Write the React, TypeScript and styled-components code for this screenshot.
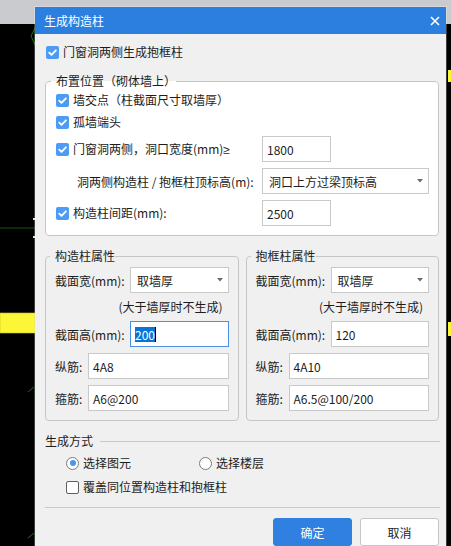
import React from 'react'
import styled, { createGlobalStyle } from 'styled-components'

const GlobalStyle = createGlobalStyle`
  html, body {
    margin: 0;
    padding: 0;
    background: #000;
  }
  body {
    font-family: "Noto Sans CJK SC", "Noto Sans", sans-serif;
    font-size: 12px;
    color: #1c1c1c;
  }
  * {
    box-sizing: border-box;
  }
`

interface ColumnGroup {
  title: string
  width: string
  height: string
  focused: boolean
  longBar: string
  stirrup: string
}

const columnGroups: ColumnGroup[] = [
  { title: '构造柱属性', width: '取墙厚', height: '200', focused: true, longBar: '4A8', stirrup: 'A6@200' },
  { title: '抱框柱属性', width: '取墙厚', height: '120', focused: false, longBar: '4A10', stirrup: 'A6.5@100/200' }
]

const CheckBox = ({ checked }: { checked: boolean }) => (
  <Box $checked={checked}>
    {checked && (
      <svg width="13" height="13" viewBox="0 0 13 13">
        <path d="M3.2 6.6 L5.5 8.9 L9.9 4.3" fill="none" stroke="#fff" strokeWidth="1.8" strokeLinecap="round" strokeLinejoin="round" />
      </svg>
    )}
  </Box>
)

const Radio = ({ checked }: { checked: boolean }) => <RadioCircle $checked={checked} />

const ArrowDown = () => (
  <svg width="6" height="4" viewBox="0 0 6 4">
    <path d="M0 0 H6 L3 3.5 Z" fill="#6b6b6b" />
  </svg>
)

const App = () => (
  <>
    <GlobalStyle />
    <Screen>
      <TopStrip />
      <Canvas>
        <svg width="451" height="522" viewBox="0 0 451 522">
          <polyline points="35,4 31,12 35,21" fill="none" stroke="#0c7a0c" strokeWidth="1" />
          <line x1="0" y1="204" x2="35" y2="204" stroke="#0d5e0d" strokeWidth="1" />
          <rect x="33" y="194" width="2" height="2" fill="#ddd" />
          <rect x="33" y="212" width="2" height="2" fill="#ddd" />
          <rect x="0" y="289" width="35" height="20" fill="#fbf736" stroke="#c9c41e" strokeWidth="0.6" />
          <line x1="28" y1="368" x2="34" y2="363" stroke="#0c7a0c" strokeWidth="1" />
          <line x1="28" y1="514" x2="34" y2="509" stroke="#0c7a0c" strokeWidth="1" />
          <rect x="448" y="46" width="3" height="12" fill="#fbf736" />
          <rect x="448" y="298" width="3" height="14" fill="#fbf736" />
        </svg>
      </Canvas>

      <Dialog>
        <TitleBar>
          <span>生成构造柱</span>
          <svg width="10" height="10" viewBox="0 0 10 10">
            <path d="M1 1 L9 9 M9 1 L1 9" stroke="#fff" strokeWidth="1.6" />
          </svg>
        </TitleBar>

        <Body>
          <CheckRow $indent={1}>
            <CheckBox checked />
            门窗洞两侧生成抱框柱
          </CheckRow>

          <Group $white $top={13}>
            <Legend>布置位置（砌体墙上）</Legend>
            <GroupRows>
              <CheckRow>
                <CheckBox checked />
                墙交点（柱截面尺寸取墙厚）
              </CheckRow>
              <CheckRow>
                <CheckBox checked />
                孤墙端头
              </CheckRow>
              <FormRow>
                <CheckRow>
                  <CheckBox checked />
                  <span>
                    门窗洞两侧，洞口宽度(mm)<Latin>≥</Latin>
                  </span>
                </CheckRow>
                <Field $width={69}>1800</Field>
              </FormRow>
              <FormRow>
                <FormLabel $indent={21}>洞两侧构造柱 / 抱框柱顶标高(m):</FormLabel>
                <Select>
                  <span>洞口上方过梁顶标高</span>
                  <ArrowDown />
                </Select>
              </FormRow>
              <FormRow>
                <CheckRow>
                  <CheckBox checked />
                  构造柱间距(mm):
                </CheckRow>
                <Field $width={69}>2500</Field>
              </FormRow>
            </GroupRows>
          </Group>

          <GroupPair>
            {columnGroups.map((group) => (
              <Group key={group.title}>
                <Legend>{group.title}</Legend>
                <GroupRows>
                  <PropRow>
                    <PropLabel $width={75}>截面宽(mm):</PropLabel>
                    <Select>
                      <span>{group.width}</span>
                      <ArrowDown />
                    </Select>
                  </PropRow>
                  <Note>(大于墙厚时不生成)</Note>
                  <PropRow>
                    <PropLabel $width={75}>截面高(mm):</PropLabel>
                    <Field $focused={group.focused}>
                      {group.focused ? (
                        <>
                          <Selected>{group.height}</Selected>
                          <Caret />
                        </>
                      ) : (
                        group.height
                      )}
                    </Field>
                  </PropRow>
                  <PropRow>
                    <PropLabel $width={33}>纵筋:</PropLabel>
                    <Field>{group.longBar}</Field>
                  </PropRow>
                  <PropRow>
                    <PropLabel $width={33}>箍筋:</PropLabel>
                    <Field>{group.stirrup}</Field>
                  </PropRow>
                </GroupRows>
              </Group>
            ))}
          </GroupPair>

          <SectionHeader>
            <span>生成方式</span>
            <Rule />
          </SectionHeader>

          <RadioRow>
            <CheckRow>
              <Radio checked />
              选择图元
            </CheckRow>
            <CheckRow>
              <Radio checked={false} />
              选择楼层
            </CheckRow>
          </RadioRow>

          <CheckRow $indent={21} $top={8}>
            <CheckBox checked={false} />
            覆盖同位置构造柱和抱框柱
          </CheckRow>

          <Divider />

          <Footer>
            <Button $primary>确定</Button>
            <Button>取消</Button>
          </Footer>
        </Body>
      </Dialog>
    </Screen>
  </>
)

export default App

const Screen = styled.div`
  position: relative;
  width: 451px;
  height: 546px;
  overflow: hidden;
  background: #000;
  display: flex;
  flex-direction: column;
`

const TopStrip = styled.div`
  height: 24px;
  flex-shrink: 0;
  background: #c9cbcf;
`

const Canvas = styled.div`
  flex: 1;

  svg {
    display: block;
  }
`

const Dialog = styled.div`
  position: absolute;
  left: 35px;
  top: 7px;
  width: 411px;
  background: #f0f0f0;
  box-shadow: 0 0 0 1px rgba(255, 255, 255, 0.25);
`

const TitleBar = styled.div`
  height: 27px;
  display: flex;
  align-items: center;
  justify-content: space-between;
  padding: 0 6px 0 9px;
  background: #2c7fdf;
  color: #fff;
  font-size: 12px;
  line-height: 16px;
`

const Body = styled.div`
  display: flex;
  flex-direction: column;
  padding: 10px 7px 12px 10px;
`

const Box = styled.span<{ $checked: boolean }>`
  width: 13px;
  height: 13px;
  flex-shrink: 0;
  border-radius: 2px;
  background: ${({ $checked }) => ($checked ? '#4c9cf3' : '#fff')};
  border: ${({ $checked }) => ($checked ? 'none' : '1px solid #5f5f5f')};

  svg {
    display: block;
  }
`

const RadioCircle = styled.span<{ $checked: boolean }>`
  width: 13px;
  height: 13px;
  flex-shrink: 0;
  border-radius: 50%;
  background: #fff;
  border: 1px solid #7b7b7b;
  display: flex;
  align-items: center;
  justify-content: center;

  &::after {
    content: '';
    display: ${({ $checked }) => ($checked ? 'block' : 'none')};
    width: 6px;
    height: 6px;
    border-radius: 50%;
    background: #4796ee;
  }
`

const CheckRow = styled.div<{ $indent?: number; $top?: number }>`
  display: flex;
  align-items: center;
  gap: 4px;
  height: 16px;
  line-height: 16px;
  white-space: nowrap;
  margin-left: ${({ $indent }) => $indent ?? 0}px;
  margin-top: ${({ $top }) => $top ?? 0}px;
`

const Latin = styled.span`
  font-family: "Noto Sans", sans-serif;
`

const Group = styled.fieldset<{ $white?: boolean; $top?: number }>`
  margin: ${({ $top }) => $top ?? 0}px 0 0;
  padding: 3px 9px 9px ${({ $white }) => ($white ? 10 : 9)}px;
  min-width: 0;
  border: 1px solid #c6c6c6;
  border-radius: 4px;
  background: ${({ $white }) => ($white ? '#fff' : 'transparent')};
`

const Legend = styled.legend`
  margin-left: -5px;
  padding: 0 0 0 5px;
  font-size: 12px;
  line-height: 16px;
  color: #1c1c1c;
`

const GroupRows = styled.div`
  display: flex;
  flex-direction: column;
  gap: 6px;
`

const FormRow = styled.div`
  display: grid;
  grid-template-columns: 206px 1fr;
  align-items: center;
`

const FormLabel = styled.span<{ $indent: number }>`
  padding-left: ${({ $indent }) => $indent}px;
  white-space: nowrap;
`

const Field = styled.div<{ $width?: number; $focused?: boolean }>`
  display: flex;
  align-items: center;
  height: 26px;
  width: ${({ $width }) => ($width ? `${$width}px` : 'auto')};
  flex: ${({ $width }) => ($width ? 'none' : '1')};
  padding: 0 4px;
  background: #fff;
  border: 1px solid ${({ $focused }) => ($focused ? '#4a8ee6' : '#c9c9c9')};
  white-space: nowrap;
`

const Selected = styled.span`
  background: #0a74d6;
  color: #fff;
  line-height: 15px;
`

const Caret = styled.span`
  width: 1px;
  height: 15px;
  background: #000;
`

const Select = styled.div`
  display: flex;
  align-items: center;
  justify-content: space-between;
  flex: 1;
  height: 26px;
  padding: 0 5px 0 6px;
  background: #fff;
  border: 1px solid #c9c9c9;
  white-space: nowrap;

  svg {
    display: block;
  }
`

const GroupPair = styled.div`
  display: grid;
  grid-template-columns: 1fr 1fr;
  column-gap: 7px;
  margin-top: 12px;
`

const PropRow = styled.div`
  display: flex;
  align-items: center;
`

const PropLabel = styled.span<{ $width: number }>`
  width: ${({ $width }) => $width}px;
  flex-shrink: 0;
  white-space: nowrap;
`

const Note = styled.div`
  text-align: right;
  padding-right: 6px;
  line-height: 16px;
`

const SectionHeader = styled.div`
  display: flex;
  align-items: center;
  gap: 7px;
  margin-top: 12px;
  height: 16px;
  line-height: 16px;
`

const Rule = styled.div`
  flex: 1;
  height: 1px;
  background: #c9c9c9;
  margin-right: -1px;
`

const RadioRow = styled.div`
  display: grid;
  grid-template-columns: 133px auto;
  margin: 6px 0 0 21px;
`

const Divider = styled.div`
  height: 1px;
  background: #c9c9c9;
  margin-top: 12px;
  margin-right: -1px;
`

const Footer = styled.div`
  display: flex;
  justify-content: flex-end;
  gap: 8px;
  margin-top: 10px;
`

const Button = styled.div<{ $primary?: boolean }>`
  width: 79px;
  height: 28px;
  display: flex;
  align-items: center;
  justify-content: center;
  border-radius: 3px;
  background: ${({ $primary }) => ($primary ? '#2f80e0' : '#fff')};
  color: ${({ $primary }) => ($primary ? '#fff' : '#1c1c1c')};
  border: 1px solid ${({ $primary }) => ($primary ? '#2f80e0' : '#c6c6c6')};
`
